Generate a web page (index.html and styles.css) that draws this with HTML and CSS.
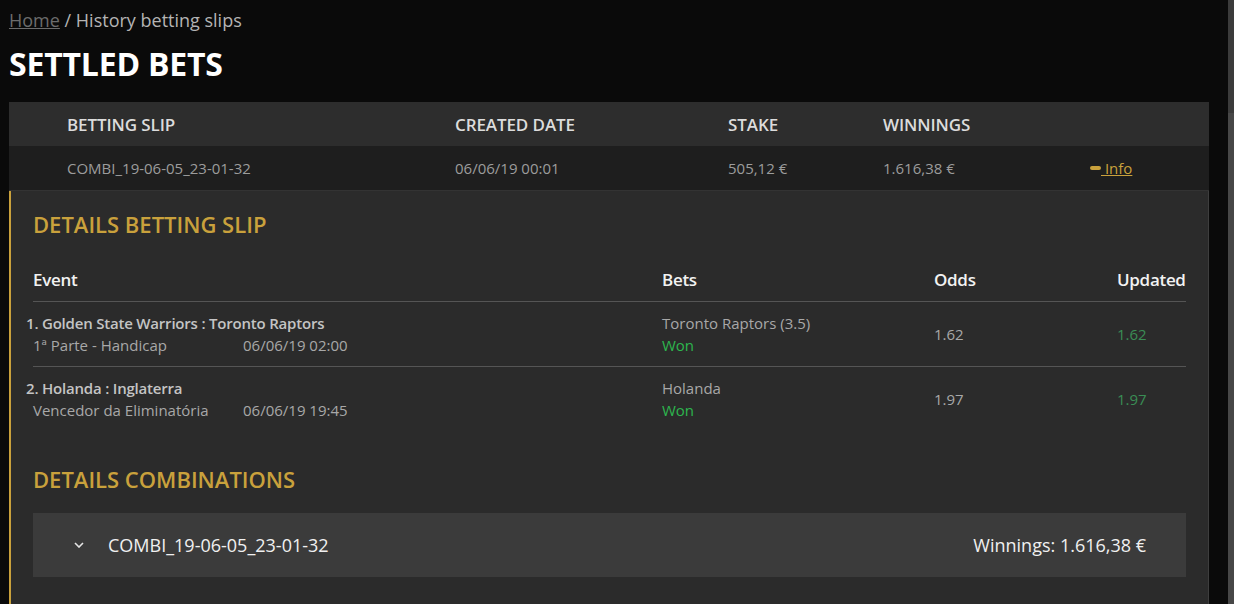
FILE: index.html
```html
<!DOCTYPE html>
<html>
<head>
<title>History betting slips</title>
<link rel="stylesheet" href="styles.css">
</head>
<body>
<div class="page">
 <div class="crumbs"><a href="#">Home</a> / History betting slips</div>
 <h1 class="title">SETTLED BETS</h1>

 <div class="slips">
  <div class="slip-row slip-head">
   <div>BETTING SLIP</div>
   <div>CREATED DATE</div>
   <div>STAKE</div>
   <div>WINNINGS</div>
   <div></div>
  </div>
  <div class="slip-row slip-item">
   <div>COMBI_19-06-05_23-01-32</div>
   <div>06/06/19 00:01</div>
   <div>505,12 €</div>
   <div>1.616,38 €</div>
   <div><a class="info" href="#"><span class="minus"></span> Info</a></div>
  </div>

  <div class="details">
   <h2 class="gold">DETAILS BETTING SLIP</h2>
   <div class="ev-row ev-head">
    <div>Event</div>
    <div>Bets</div>
    <div>Odds</div>
    <div>Updated</div>
   </div>
   <div class="ev-row">
    <div>
     <div class="ev-name">1. Golden State Warriors : Toronto Raptors</div>
     <div class="ev-sub"><span class="market">1ª Parte - Handicap</span><span>06/06/19 02:00</span></div>
    </div>
    <div>
     <div class="bet">Toronto Raptors (3.5)</div>
     <div class="won">Won</div>
    </div>
    <div class="odds">1.62</div>
    <div class="upd">1.62</div>
   </div>
   <div class="ev-row ev-last">
    <div>
     <div class="ev-name">2. Holanda : Inglaterra</div>
     <div class="ev-sub"><span class="market">Vencedor da Eliminatória</span><span>06/06/19 19:45</span></div>
    </div>
    <div>
     <div class="bet">Holanda</div>
     <div class="won">Won</div>
    </div>
    <div class="odds">1.97</div>
    <div class="upd">1.97</div>
   </div>

   <h2 class="gold combis">DETAILS COMBINATIONS</h2>
   <div class="combi">
    <svg class="chev" width="10" height="6" viewBox="0 0 10 6"><path d="M1 1 L5 5 L9 1" fill="none" stroke="#e6e6e6" stroke-width="1.6"/></svg>
    <span class="combi-name">COMBI_19-06-05_23-01-32</span>
    <span class="combi-win">Winnings: 1.616,38 €</span>
   </div>
  </div>
 </div>
</div>
<div class="scroll"><div class="thumb"></div></div>
</body>
</html>
```

FILE: styles.css
```css
html, body {
 margin: 0;
 height: 100%;
 overflow: hidden;
}
body {
 background: #0a0a0a;
 font-family: "Open Sans", "DejaVu Sans", sans-serif;
 display: flex;
 flex-direction: row;
}
.page {
 flex: 1;
 padding: 0 19px 0 9px;
}
.scroll {
 width: 6px;
 height: 100vh;
 background: #474747;
}
.thumb {
 height: 113px;
 background: #3b3b3b;
}
.crumbs {
 font-size: 18px;
 color: #b4b4b4;
 line-height: 24px;
 padding-top: 8px;
}
.crumbs a {
 color: #6c6c6c;
}
.title {
 margin: 0;
 color: #fff;
 font-size: 32px;
 font-weight: 700;
 line-height: 40px;
 padding-top: 12px;
 letter-spacing: -0.2px;
}
.slips {
 margin-top: 18px;
}
.slip-row {
 display: grid;
 grid-template-columns: 388px 273px 155px 207px 1fr;
 padding-left: 58px;
 align-items: center;
 height: 44px;
}
.slip-head {
 background: #2d2d2d;
 color: #dcdcdc;
 font-size: 17px;
 font-weight: 600;
 letter-spacing: -0.1px;
}
.slip-item {
 background: #1e1e1e;
 color: #9c9c9c;
 font-size: 15px;
 border-bottom: 1px solid #333;
}
.info {
 color: #c9a13c;
 font-size: 15px;
}
.minus {
 display: inline-block;
 width: 11px;
 height: 4px;
 border-radius: 2px;
 background: #c9a13c;
 vertical-align: middle;
 margin-bottom: 3px;
}
.details {
 background: #2b2b2b;
 border-left: 2px solid #c9a13c;
 border-right: 1px solid #3e3e3e;
 padding: 10px 22px 40px 22px;
}
.gold {
 margin: 0;
 color: #c9a13c;
 font-size: 22px;
 font-weight: 600;
 line-height: 46px;
}
.ev-row {
 display: grid;
 grid-template-columns: 629px 272px 183px 1fr;
 align-items: center;
 border-bottom: 1px solid #555;
 height: 64px;
 color: #a8a8a8;
 font-size: 15px;
}
.ev-row.ev-last {
 border-bottom: none;
}
.ev-head {
 height: 44px;
 margin-top: 10px;
 color: #f2f2f2;
 font-size: 17px;
 font-weight: 600;
 letter-spacing: -0.3px;
}
.ev-name {
 margin-left: -7px;
 color: #c4c4c4;
 font-weight: 600;
 line-height: 22px;
 letter-spacing: -0.2px;
}
.ev-sub {
 display: flex;
 line-height: 22px;
}
.market {
 width: 210px;
}
.bet {
 line-height: 22px;
}
.won {
 color: #2db64e;
 line-height: 22px;
}
.upd {
 color: #3a8d55;
}
.combis {
 margin-top: 25px;
}
.combi {
 display: flex;
 align-items: center;
 background: #3b3b3b;
 height: 64px;
 margin-top: 11px;
 padding: 0 40px 0 41px;
 color: #f0f0f0;
 font-size: 18px;
}
.chev {
 margin-right: 24px;
}
.combi-win {
 margin-left: auto;
}
```
